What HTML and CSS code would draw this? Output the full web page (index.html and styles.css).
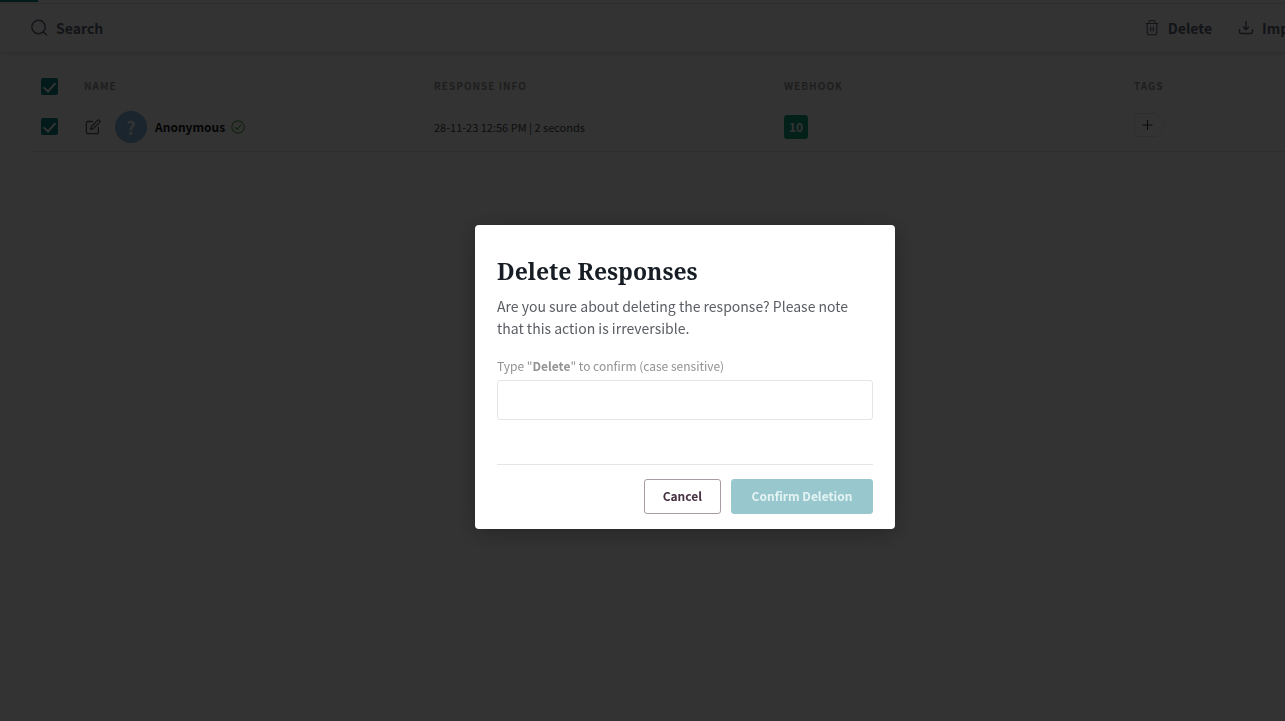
FILE: index.html
```html
<!DOCTYPE html>
<html lang="en">
<head>
    <meta charset="UTF-8">
    <meta name="viewport" content="width=device-width, initial-scale=1.0">
    <title>Responses</title>
    <link rel="stylesheet" href="styles.css">
</head>
<body>
    <div class="page">
        <div class="tab-line"></div>

        <header class="toolbar">
            <button class="tool" type="button">
                <svg width="18" height="18" viewBox="0 0 18 18" fill="none" stroke="currentColor" stroke-width="1.4" stroke-linecap="round">
                    <circle cx="8.500" cy="8" r="6.700"/>
                    <path d="M13.500 13l3 3"/>
                </svg>
                Search
            </button>
            <div class="actions">
                <button class="tool" type="button">
                    <svg width="16" height="18" viewBox="0 0 16 18" fill="none" stroke="currentColor" stroke-width="1.1" stroke-linecap="round" stroke-linejoin="round">
                        <path d="M2 4.500h12M5 4.200V2.800A1.300 1.300 0 0 1 6.300 1.500h3.400A1.300 1.300 0 0 1 11 2.800v1.400M3.200 4.500v9.500a1.800 1.800 0 0 0 1.800 1.800h6a1.800 1.800 0 0 0 1.800-1.800V4.500M6.700 8v4M9.300 8v4"/>
                    </svg>
                    Delete
                </button>
                <button class="tool" type="button">
                    <svg width="16" height="18" viewBox="0 0 16 18" fill="none" stroke="currentColor" stroke-width="1.4" stroke-linecap="round" stroke-linejoin="round">
                        <path d="M8 2.500v8M5.300 8l2.700 2.700L10.700 8M1.500 10.500v2a2 2 0 0 0 2 2h9a2 2 0 0 0 2-2v-2"/>
                    </svg>
                    Import
                </button>
            </div>
        </header>

        <div class="table-wrap">
            <table class="responses">
                <thead>
                    <tr>
                        <th class="check"><input type="checkbox" aria-label="Select all" checked></th>
                        <th>NAME</th>
                        <th>RESPONSE INFO</th>
                        <th>WEBHOOK</th>
                        <th>TAGS</th>
                    </tr>
                </thead>
                <tbody>
                    <tr>
                        <td class="check"><input type="checkbox" aria-label="Select Anonymous" checked></td>
                        <td>
                            <div class="person">
                                <svg class="edit" width="16" height="16" viewBox="0 0 16 16" fill="none" stroke="currentColor" stroke-width="1.300" stroke-linecap="round" stroke-linejoin="round">
                                    <path d="M7.500 2.500H2.600A1.200 1.200 0 0 0 1.400 3.700v9.700a1.200 1.200 0 0 0 1.200 1.200h9.600a1.200 1.200 0 0 0 1.200-1.200V8.500"/>
                                    <path d="M12.500 1.400a1.300 1.300 0 0 1 2 2L8.200 9.700l-2.600.7.700-2.600z"/>
                                </svg>
                                <span class="avatar">?</span>
                                <span class="name">Anonymous</span>
                                <svg class="ok" width="14" height="14" viewBox="0 0 14 14" fill="none" stroke="currentColor" stroke-width="1.200" stroke-linecap="round" stroke-linejoin="round">
                                    <circle cx="7" cy="7" r="6.200"/>
                                    <path d="M4.200 7.400l1.900 1.900 3.800-4.400"/>
                                </svg>
                            </div>
                        </td>
                        <td class="info">28-11-23 12:56 PM | 2 seconds</td>
                        <td><span class="badge">10</span></td>
                        <td>
                            <button class="add-tag" type="button" aria-label="Add tag">
                                <svg width="34" height="24" viewBox="0 0 34 24" fill="none">
                                    <path class="tag-shape" d="M3 .5h19L32.500 12 22 23.500H3A2.500 2.500 0 0 1 .5 21V3A2.500 2.500 0 0 1 3 .5z"/>
                                    <path class="tag-plus" d="M13.500 7v10M8.500 12h10"/>
                                </svg>
                            </button>
                        </td>
                    </tr>
                </tbody>
            </table>
        </div>
    </div>

    <div class="overlay">
        <form class="modal" role="dialog" aria-labelledby="modal-title">
            <h2 id="modal-title">Delete Responses</h2>
            <p>Are you sure about deleting the response? Please note that this action is irreversible.</p>
            <label for="confirm">Type "<b>Delete</b>" to confirm (case sensitive)</label>
            <input type="text" id="confirm" autocomplete="off">
            <div class="modal-footer">
                <button class="btn cancel" type="button">Cancel</button>
                <button class="btn confirm" type="submit" disabled>Confirm Deletion</button>
            </div>
        </form>
    </div>
</body>
</html>
```
FILE: styles.css
```css
* {
    box-sizing: border-box;
}
body {
    margin: 0;
    font-family: "Noto Sans CJK JP", "Open Sans", sans-serif;
    font-size: 14px;
    color: #141414;
    background: #fff;
}
button {
    font-family: inherit;
    cursor: pointer;
}

/* page behind the dialog */
.page {
    height: 100vh;
    overflow: hidden;
}
.tab-line {
    height: 4px;
    border-bottom: 1px solid #ececec;
}
.tab-line::before {
    content: "";
    display: block;
    width: 38px;
    height: 2px;
    background: #0a8082;
}
.toolbar {
    display: flex;
    justify-content: space-between;
    align-items: center;
    width: calc(100% + 25px);
    height: 48px;
    padding-left: 30px;
    box-shadow: 0 1px 4px rgba(0, 0, 0, 0.16);
}
.actions {
    display: flex;
    gap: 26px;
}
.tool {
    display: flex;
    align-items: center;
    gap: 8px;
    padding: 0;
    border: none;
    background: none;
    color: #5a6478;
    font-size: 14px;
    font-weight: bold;
    line-height: 24px;
}
.table-wrap {
    margin-left: 32px;
    padding-top: 18px;
}
.responses {
    width: 1452px;
    table-layout: fixed;
    border-collapse: collapse;
}
.responses th {
    width: 350px;
    height: 32px;
    padding: 0;
    text-align: left;
    color: #969696;
    font-size: 10px;
    font-weight: bold;
    letter-spacing: 1px;
    line-height: 16px;
}
.responses td {
    height: 49px;
    padding: 1px 0 0;
    border-bottom: 1px solid #e4e4e4;
}
.responses .check {
    width: 52px;
    padding-left: 9px;
}
.check input {
    appearance: none;
    display: block;
    width: 17px;
    height: 17px;
    margin: 0;
    border-radius: 2px;
    background: #0a8082;
}
.check input::after {
    content: "";
    display: block;
    width: 5px;
    height: 10px;
    margin: 0 auto;
    border: solid #fff;
    border-width: 0 2px 2px 0;
    transform: translateY(2px) rotate(42deg);
}
.person {
    display: flex;
    align-items: center;
}
.edit {
    margin: 0 14px 0 1px;
    color: #5a5a5a;
}
.avatar {
    width: 32px;
    height: 32px;
    margin-right: 8px;
    border-radius: 50%;
    background: #84b8e4;
    color: #fff;
    font-size: 18px;
    font-weight: bold;
    line-height: 32px;
    text-align: center;
}
.name {
    font-size: 12px;
    font-weight: bold;
    line-height: 20px;
}
.ok {
    margin-left: 6px;
    color: #5cab54;
}
.info {
    color: #464646;
    font-size: 11px;
    line-height: 16px;
}
.badge {
    display: block;
    width: 24px;
    height: 24px;
    border-radius: 3px;
    background: #12a07e;
    color: #fff;
    font-size: 12px;
    font-weight: bold;
    line-height: 24px;
    text-align: center;
}
.add-tag {
    display: block;
    margin-bottom: 4px;
    padding: 0;
    border: none;
    background: none;
}
.add-tag svg {
    display: block;
}
.tag-shape {
    stroke: #e4e4e4;
}
.tag-plus {
    stroke: #333;
}

/* dialog */
.overlay {
    position: fixed;
    inset: 0;
    display: flex;
    align-items: center;
    justify-content: center;
    padding: 33px 0 0 85px;
    background: rgba(0, 0, 0, 0.8);
}
.modal {
    width: 420px;
    max-width: 100%;
    padding: 32px 22px 15px;
    border-radius: 4px;
    background: #fff;
    box-shadow: 0 4px 24px rgba(0, 0, 0, 0.3);
}
.modal h2 {
    margin: 0 0 10px;
    color: #161d24;
    font-family: "Source Serif Pro", "Noto Serif", "Liberation Serif", serif;
    font-size: 23px;
    font-weight: bold;
    line-height: 28px;
}
.modal p {
    margin: 0 0 17px;
    color: #5a5d63;
    font-size: 14px;
    line-height: 22px;
}
.modal label {
    display: block;
    margin-bottom: 4px;
    color: #929292;
    font-size: 12px;
    line-height: 20px;
}
.modal input {
    display: block;
    width: 100%;
    height: 40px;
    padding: 0 12px;
    border: 1px solid #e5e5e5;
    border-radius: 3px;
    background: #fff;
    font-family: inherit;
    font-size: 14px;
}
.modal-footer {
    display: flex;
    justify-content: flex-end;
    gap: 10px;
    margin-top: 44px;
    padding-top: 14px;
    border-top: 1px solid #e5e5e5;
}
.btn {
    height: 35px;
    padding: 0 18px 1px;
    border: 1px solid #a99ba6;
    border-radius: 3px;
    background: #fff;
    color: #452f41;
    font-size: 12px;
    font-weight: bold;
    line-height: 20px;
}
.btn.confirm {
    min-width: 142px;
    border-color: #98c8cd;
    background: #98c8cd;
    color: #e4f3f4;
}
```
